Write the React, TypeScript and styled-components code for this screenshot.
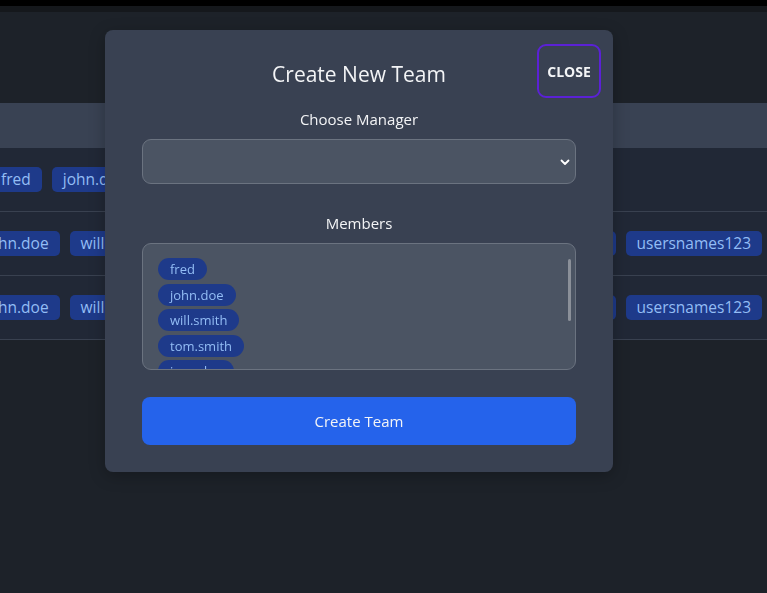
import React from "react";
import styled, { createGlobalStyle } from "styled-components";

const Global = createGlobalStyle`
  html, body { margin: 0; padding: 0; background: #1d2229; }
  body { font-family: "Open Sans", "Noto Sans", sans-serif; overflow: hidden; }
  * { box-sizing: border-box; }
`;

const Page = styled.div`
  width: 767px;
  height: 593px;
  background: #1d2229;
  overflow: hidden;
  display: flex;
  flex-direction: column;
`;

const TopBar = styled.div`
  height: 6px;
  background: #000;
  flex: none;
`;

const SubBar = styled.div`
  height: 6px;
  background: #15181c;
  flex: none;
`;

const Table = styled.div`
  margin-top: 91px;
  display: flex;
  flex-direction: column;
`;

const HeadRow = styled.div`
  height: 45px;
  background: #394253;
`;

const Row = styled.div`
  height: 64px;
  background: #212836;
  border-bottom: 1px solid #394150;
  display: flex;
  align-items: center;
  justify-content: space-between;
  padding-right: 5px;
  white-space: nowrap;
`;

const TagGroup = styled.div<{ $shift?: number }>`
  display: flex;
  align-items: center;
  gap: 10px;
  margin-left: ${(p) => p.$shift ?? 0}px;
`;

const Tag = styled.span`
  flex: none;
  height: 25px;
  padding: 0 11px;
  border-radius: 5px;
  background: #1e3a8a;
  color: #93bdf5;
  font-size: 15.5px;
  line-height: 25px;
  display: inline-flex;
  align-items: center;
`;

const Modal = styled.div`
  position: fixed;
  left: 105px;
  top: 30px;
  width: 508px;
  height: 442px;
  background: #394152;
  border-radius: 8px;
  padding: 0 37px;
  display: flex;
  flex-direction: column;
  align-items: stretch;
  box-shadow: 0 4px 16px rgba(0, 0, 0, 0.25);
`;

const Header = styled.div`
  position: relative;
  height: 78px;
  flex: none;
  display: flex;
  align-items: flex-start;
  justify-content: center;
`;

const Title = styled.h2`
  margin: 28px 0 0;
  font-size: 21px;
  font-weight: 400;
  color: #f3f4f6;
  line-height: 32px;
`;

const CloseButton = styled.button`
  position: absolute;
  right: -25px;
  top: 14px;
  width: 64px;
  height: 54px;
  border: 2px solid #5b21d6;
  border-radius: 9px;
  background: transparent;
  color: #f3f4f6;
  font-family: inherit;
  font-weight: 700;
  font-size: 14px;
  padding: 0;
  cursor: pointer;
`;

const Label = styled.div`
  flex: none;
  text-align: center;
  color: #f3f4f6;
  font-size: 15px;
  line-height: 22px;
  margin-bottom: 9px;
`;

const SelectBox = styled.div`
  flex: none;
  height: 45px;
  background: #4b5463;
  border: 1px solid #6b7380;
  border-radius: 9px;
  display: flex;
  align-items: center;
  justify-content: flex-end;
  padding-right: 3px;
  margin-bottom: 28px;
`;

const MemberFrame = styled.div`
  position: relative;
  flex: none;
  height: 127px;
  margin-bottom: 27px;
`;

const MemberBox = styled.div`
  height: 100%;
  background: #4b5463;
  border: 1px solid #6b7380;
  border-radius: 9px;
  padding: 14px 15px;
  overflow: hidden;
  display: flex;
  flex-direction: column;
  align-items: flex-start;
  gap: 3.5px;
`;

const ScrollThumb = styled.div`
  position: absolute;
  right: 5px;
  top: 16px;
  width: 3px;
  height: 62px;
  border-radius: 2px;
  background: #8b9099;
`;

const Pill = styled.span`
  flex: none;
  height: 22px;
  padding: 0 12px;
  border-radius: 11px;
  background: #1e3a8a;
  color: #93bdf5;
  font-size: 13px;
  line-height: 22px;
  white-space: nowrap;
`;

const CreateButton = styled.button`
  flex: none;
  height: 48px;
  border: none;
  border-radius: 8px;
  background: #2563eb;
  color: #f3f4f6;
  font-family: inherit;
  font-size: 15px;
  cursor: pointer;
`;

const leftTags = ["fred", "john.doe", "will.smith", "tom.smith", "jane.doe"];
const rightTags = ["mary.jones", "usersnames123"];

const members = ["fred", "john.doe", "will.smith", "tom.smith", "jane.doe", "mary.jones", "usersnames123"];

export default function App() {
  return (
    <Page>
      <Global />
      <TopBar />
      <SubBar />
      <Table>
        <HeadRow />
        <Row>
          <TagGroup $shift={-10}>
            <Tag>fred</Tag>
            <Tag>john.doe</Tag>
          </TagGroup>
        </Row>
        {[0, 1].map((i) => (
          <Row key={i}>
            <TagGroup $shift={-88}>
              {leftTags.map((t) => (
                <Tag key={t}>{t}</Tag>
              ))}
            </TagGroup>
            <TagGroup>
              {rightTags.map((t) => (
                <Tag key={t}>{t}</Tag>
              ))}
            </TagGroup>
          </Row>
        ))}
      </Table>
      <Modal>
        <Header>
          <Title>Create New Team</Title>
          <CloseButton>CLOSE</CloseButton>
        </Header>
        <Label>Choose Manager</Label>
        <SelectBox>
          <svg width="14" height="14" viewBox="0 0 14 14" fill="none">
            <path d="M3.5 5.5 L7 9 L10.5 5.5" stroke="#ffffff" strokeWidth="1.8" strokeLinecap="round" strokeLinejoin="round" />
          </svg>
        </SelectBox>
        <Label>Members</Label>
        <MemberFrame>
          <MemberBox>
            {members.map((m) => (
              <Pill key={m}>{m}</Pill>
            ))}
          </MemberBox>
          <ScrollThumb />
        </MemberFrame>
        <CreateButton>Create Team</CreateButton>
      </Modal>
    </Page>
  );
}
